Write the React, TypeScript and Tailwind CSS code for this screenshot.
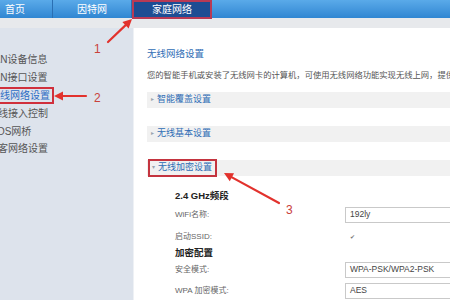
const font = "font-['Liberation_Sans','Noto_Sans_CJK_SC',sans-serif]";

const sideItems = [
  { label: "LAN设备信息" },
  { label: "LAN接口设置" },
  { label: "无线网络设置", active: true },
  { label: "无线接入控制" },
  { label: "WDS网桥" },
  { label: "访客网络设置" },
];

function arrowHead(x1: number, y1: number, x2: number, y2: number, len = 9, half = 4.5) {
  const dx = x2 - x1;
  const dy = y2 - y1;
  const d = Math.hypot(dx, dy);
  const ux = dx / d;
  const uy = dy / d;
  const bx = x2 - ux * len;
  const by = y2 - uy * len;
  return `${x2},${y2} ${bx - uy * half},${by + ux * half} ${bx + uy * half},${by - ux * half}`;
}

function Arrow({ x1, y1, x2, y2 }: { x1: number; y1: number; x2: number; y2: number }) {
  const dx = x2 - x1;
  const dy = y2 - y1;
  const d = Math.hypot(dx, dy);
  const ex = x2 - (dx / d) * 7;
  const ey = y2 - (dy / d) * 7;
  return (
    <g>
      <line x1={x1} y1={y1} x2={ex} y2={ey} stroke="#e2322d" strokeWidth={2.2} strokeLinecap="round" />
      <polygon points={arrowHead(x1, y1, x2, y2)} fill="#e2322d" />
    </g>
  );
}

function Section({ title, open }: { title: string; open?: boolean }) {
  return (
    <div className="flex h-[16px] items-center bg-[#f1f1f1] pl-[4px]">
      <span
        className={`flex h-[18px] items-center gap-[3px] pr-[3px] ${
          open ? "border-2 border-[#c4343f] -ml-[3px] pl-[2px]" : ""
        }`}
      >
        <span className="text-[6px] text-[#9aa4b0]">{open ? "▾" : "▸"}</span>
        <span className="text-[9px] text-[#2f6db5]">{title}</span>
      </span>
    </div>
  );
}

function Row({
  label,
  children,
  bold,
  h,
}: {
  label: string;
  children?: React.ReactNode;
  bold?: boolean;
  h: string;
}) {
  return (
    <div className={`flex items-center ${h}`}>
      <div
        className={`w-[170px] shrink-0 ${bold ? "text-[9.5px] font-bold text-[#222]" : "text-[8px] text-[#666]"}`}
      >
        {label}
      </div>
      {children}
    </div>
  );
}

function Field({ value }: { value: string }) {
  return (
    <div className="flex h-[16px] w-[130px] shrink-0 items-center border border-[#c9c9c9] bg-white pl-[4px] text-[8.5px] text-[#444]">
      {value}
    </div>
  );
}

export default function App() {
  return (
    <div className={`relative h-[300px] w-[450px] overflow-hidden bg-white ${font}`}>
      {/* Top nav */}
      <div className="flex h-[18px] bg-gradient-to-b from-[#5aaae9] to-[#2f86d2] text-[10px] text-white">
        <div className="flex w-[53px] items-center pl-[5px] border-r border-[#2a6fb3]">首页</div>
        <div className="flex w-[79px] items-center justify-center border-r border-[#2a6fb3]">因特网</div>
        <div className="flex h-[19px] w-[80px] items-center justify-center border-2 border-[#b83a55] bg-[#1d4d93]">
          家庭网络
        </div>
      </div>
      <div className="h-[10px] bg-[#e7e9ec]" />

      <div className="flex h-[272px]">
        {/* Sidebar */}
        <div className="w-[133px] shrink-0 overflow-hidden bg-[#dde3ec] pt-[23px]">
          {sideItems.map((it) => (
            <div key={it.label} className="flex h-[17.8px] items-center">
              <span
                className={`-ml-[12px] whitespace-nowrap text-[10px] ${
                  it.active
                    ? "border-2 border-[#d0303c] pr-[2px] leading-[13px] text-[#2c6cc4]"
                    : "text-[#555]"
                }`}
              >
                {it.label}
              </span>
            </div>
          ))}
        </div>

        {/* Main */}
        <div className="flex-1 border-l border-[#eef1f5] pl-[13px] pt-[19px]">
          <div className="text-[9.5px] text-[#2f6db5]">无线网络设置</div>
          <div className="mt-[8px] whitespace-nowrap text-[8.3px] text-[#555]">
            您的智能手机或安装了无线网卡的计算机，可使用无线网络功能实现无线上网，提供
          </div>
          <div className="mt-[10px] flex flex-col gap-[18px]">
            <Section title="智能覆盖设置" />
            <Section title="无线基本设置" />
            <Section title="无线加密设置" open />
          </div>

          <div className="mt-[13px] pl-[28px]">
            <Row label="2.4 GHz频段" bold h="h-[14px]" />
            <Row label="WiFi名称:" h="h-[24px]">
              <Field value="192ly" />
            </Row>
            <Row label="启动SSID:" h="h-[20px]">
              <span className="ml-[5px] mt-[2px] text-[6px] text-[#777]">✔</span>
            </Row>
            <Row label="加密配置" bold h="h-[12px]" />
            <Row label="安全模式:" h="h-[22px]">
              <Field value="WPA-PSK/WPA2-PSK" />
            </Row>
            <Row label="WPA 加密模式:" h="h-[20px]">
              <Field value="AES" />
            </Row>
          </div>
        </div>
      </div>

      {/* Annotations */}
      <svg className="pointer-events-none absolute inset-0" width={450} height={300} viewBox="0 0 450 300">
        <Arrow x1={108} y1={42} x2={132} y2={19} />
        <Arrow x1={86} y1={96} x2={54} y2={96} />
        <Arrow x1={279} y1={203} x2={224} y2={173} />
      </svg>
      <span className="absolute left-[94px] top-[40px] text-[12px] text-[#c9413b]">1</span>
      <span className="absolute left-[94px] top-[89px] text-[12px] text-[#c9413b]">2</span>
      <span className="absolute left-[286px] top-[201px] text-[12px] text-[#c9413b]">3</span>
    </div>
  );
}
